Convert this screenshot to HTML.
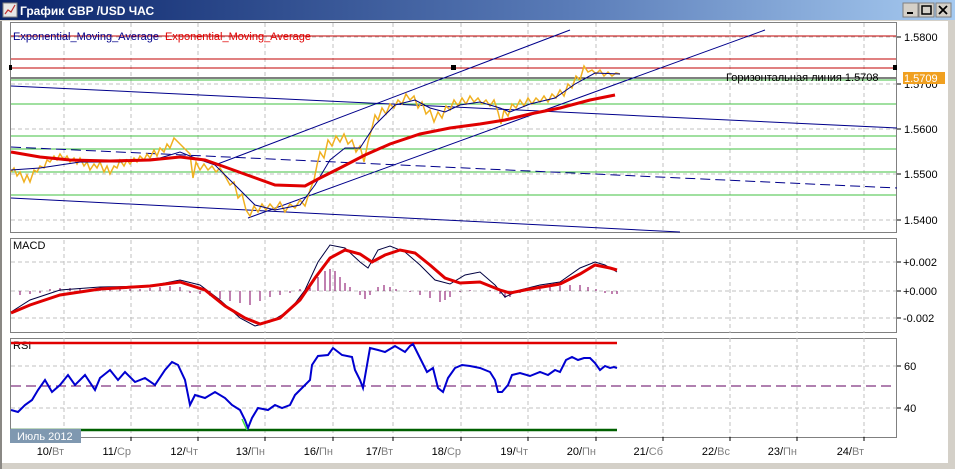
<!DOCTYPE html>
<html><head><meta charset="utf-8"><style>
body{margin:0;width:955px;height:469px;overflow:hidden;background:#d4d0c8;font-family:"Liberation Sans",sans-serif}
</style></head><body>
<svg width="955" height="469" xmlns="http://www.w3.org/2000/svg" style="position:absolute;left:0;top:0" font-family="Liberation Sans, DejaVu Sans, sans-serif">
<defs><linearGradient id="tb" x1="0" x2="1"><stop offset="0" stop-color="#0a246a"/><stop offset="0.6" stop-color="#5a7cb8"/><stop offset="1" stop-color="#a6caf0"/></linearGradient></defs>
<rect x="0" y="0" width="955" height="469" fill="#d4d0c8"/>
<rect x="0" y="0" width="955" height="20" fill="url(#tb)"/>
<rect x="3" y="3" width="14" height="14" fill="#e8e8e8" stroke="#808080"/>
<polyline points="5,14 8,10 11,12 15,5" fill="none" stroke="#c03030" stroke-width="1.2"/>
<text x="20" y="15" fill="#fff" font-weight="bold" font-size="12">График GBP /USD  ЧАС</text>
<g fill="#d4d0c8" stroke="#808080"><rect x="903" y="3" width="15" height="14"/><rect x="919" y="3" width="15" height="14"/><rect x="936" y="3" width="15" height="14"/></g>
<rect x="907" y="12" width="6" height="2" fill="#000"/>
<rect x="922" y="6" width="9" height="8" fill="none" stroke="#000" stroke-width="1.5"/>
<path d="M939 6l8 8M947 6l-8 8" stroke="#000" stroke-width="1.8"/>
<rect x="2" y="21" width="946" height="442" fill="#fff"/>
<rect x="948" y="21" width="7" height="448" fill="#d4d0c8"/>
<line x1="1" y1="21" x2="1" y2="469" stroke="#404040"/>
<g fill="none" stroke="#808080"><rect x="10.5" y="22.5" width="886" height="210"/><rect x="10.5" y="238.5" width="886" height="94"/><rect x="10.5" y="338.5" width="886" height="99"/></g>
<g stroke="#c0c0c0" stroke-dasharray="4,3">
<path d="M64 23V437M131 23V437M198 23V437M265 23V437M333 23V437M393 23V437M461 23V437M528 23V437M596 23V437M663 23V437M730 23V437M797 23V437M864 23V437"/>
<path d="M11 37H896M11 84H896M11 129H896M11 174H896M11 220H896M11 262H896M11 291H896M11 318H896M11 366H896M11 408H896"/>
</g>
<g stroke="#fff" stroke-width="5"><path d="M11 235.5H897M11 335.5H897"/></g>
<g stroke="#000"><path d="M897 37h4M897 84h4M897 129h4M897 174h4M897 220h4M897 262h4M897 291h4M897 318h4M897 366h4M897 408h4"/></g>
<g font-size="11" fill="#000">
<text x="904" y="41">1.5800</text><text x="904" y="88">1.5700</text><text x="904" y="133">1.5600</text><text x="904" y="178">1.5500</text><text x="904" y="224">1.5400</text>
<text x="903" y="266">+0.002</text><text x="903" y="295">+0.000</text><text x="903" y="322">-0.002</text>
<text x="904" y="370">60</text><text x="904" y="412">40</text>
</g>
<rect x="903" y="72" width="42" height="12" fill="#f0a020"/><text x="904" y="82" font-size="11" fill="#fff">1.5709</text>
<g stroke="#c00000"><path d="M11 36H896M11 59H896M11 68H896"/></g>
<g stroke="#40c040"><path d="M11 80H896M11 104H896M11 136H896M11 149H896M11 172H896M11 195H896"/></g>
<line x1="11" y1="78" x2="896" y2="78" stroke="#000"/>
<text x="726" y="81" font-size="11" fill="#000">Горизонтальная линия 1.5708</text>
<rect x="9" y="65" width="3" height="5" fill="#000"/><rect x="451" y="65" width="5" height="5" fill="#000"/><rect x="893" y="65" width="4" height="5" fill="#000"/>
<g stroke="#00008b" fill="none" stroke-width="1">
<path d="M248 218L765 30"/><path d="M215 165L570 30"/><path d="M11 86L897 128"/><path d="M11 198L680 232"/>
<path d="M11 147L897 188" stroke-dasharray="10,5"/>
</g>
<polyline fill="none" stroke="#f0b020" stroke-width="1.5" points="11,172 14,168 17,176 20,172 24,182 27,175 30,182 34,170 37,172 40,166 44,168 47,160 50,162 54,156 57,160 60,154 64,160 67,156 70,162 74,158 77,164 80,158 84,166 87,162 90,170 94,164 97,168 100,162 104,172 107,166 110,174 114,166 117,168 120,160 124,166 127,160 130,164 134,158 137,162 140,156 144,160 147,154 150,158 154,150 157,156 160,148 164,152 167,144 170,148 174,138 178,142 182,146 186,150 190,154 193,178 196,162 200,170 204,164 208,170 212,166 216,172 220,168 225,176 230,185 234,182 238,198 242,194 246,210 250,216 254,206 258,212 262,204 266,210 270,204 275,210 280,202 285,212 290,204 295,208 300,200 305,206 310,190 314,180 317,165 320,152 324,158 328,140 332,146 336,136 340,142 344,134 348,144 352,140 356,152 360,146 364,162 368,142 372,128 375,115 378,120 382,108 386,114 390,104 394,108 398,100 402,104 406,94 410,100 414,96 418,108 422,102 426,114 430,110 434,122 438,112 442,118 446,106 450,110 454,100 458,106 462,98 466,104 470,96 474,102 478,98 482,104 486,100 490,106 494,100 498,112 501,124 504,110 508,116 512,104 516,108 520,100 524,106 528,98 532,104 536,98 540,102 544,96 548,102 552,94 556,98 560,90 564,96 568,84 572,88 576,76 580,80 584,66 588,72 592,70 596,74 600,70 604,76 608,72 612,76 616,73 620,74"/>
<polyline fill="none" stroke="#000080" stroke-width="1" points="11,170 40,168 80,162 120,162 160,158 180,152 195,158 215,165 235,185 255,205 275,210 300,205 315,185 330,160 345,148 360,148 375,125 395,105 415,100 430,108 445,112 460,105 480,102 500,108 510,112 530,104 555,98 575,84 595,73 620,74"/>
<polyline fill="none" stroke="#e00000" stroke-width="3" points="11,152 40,157 70,160 110,161 150,160 180,157 205,160 225,167 250,176 275,185 305,186 320,178 340,168 365,155 390,144 420,134 450,128 480,124 505,120 530,114 560,108 590,100 615,95"/>
<text x="13" y="40" font-size="11" fill="#00008b">Exponential_Moving_Average</text><text x="165" y="40" font-size="11" fill="#e00000">Exponential_Moving_Average</text>
<text x="13" y="249" font-size="11" fill="#000">MACD</text>
<g stroke="#800060" stroke-width="1">
<path d="M20 291v4M30 291v3M40 291v2M50 291v-2M60 291v-3M70 291v-3M80 291v-2M90 291v-1M100 291v-2M110 291v-2M120 291v-3M130 291v-2M140 291v-2M150 291v-3M160 291v-4M170 291v-5M180 291v-4M190 291v2M200 291v3M210 291v5M220 291v8M230 291v10M240 291v12M250 291v14M260 291v10M270 291v6M280 291v4M290 291v2M300 291v-2M310 291v-8M318 291v-14M325 291v-20M330 291v-22M335 291v-20M340 291v-14M345 291v-8M350 291v-4M360 291v4M365 291v8M370 291v4M378 291v-4M384 291v-6M390 291v-4M396 291v-2M410 291v1M420 291v4M430 291v7M440 291v11M445 291v9M450 291v6M460 291v1M470 291v-1M490 291v-1M500 291v3M505 291v7M510 291v6M520 291v2M540 291v-2M550 291v-4M560 291v-5M570 291v-6M580 291v-6M588 291v-4M596 291v-2M605 291v2M612 291v3M617 291v3"/>
</g>
<polyline fill="none" stroke="#000040" stroke-width="1" points="11,312 30,300 60,290 100,287 150,286 180,280 200,285 220,300 240,318 255,326 270,322 290,310 305,290 318,262 330,245 345,248 360,262 368,268 378,250 390,246 405,252 420,265 435,280 450,284 465,275 480,272 495,285 505,297 520,290 540,285 560,282 580,268 595,262 605,265 617,272"/>
<polyline fill="none" stroke="#e00000" stroke-width="3" points="11,313 30,305 60,295 100,289 150,286 180,282 205,290 225,306 245,318 260,324 280,318 300,300 315,278 330,258 345,250 360,254 372,262 385,255 400,250 415,253 430,265 445,278 460,283 480,282 500,290 510,293 530,289 560,284 580,274 595,265 610,268 617,270"/>
<text x="13" y="349" font-size="11" fill="#000">RSI</text>
<line x1="11" y1="343" x2="617" y2="343" stroke="#e00000" stroke-width="2.5"/>
<line x1="11" y1="386" x2="896" y2="386" stroke="#600060" stroke-dasharray="10,5"/>
<line x1="11" y1="430" x2="617" y2="430" stroke="#006000" stroke-width="2.5"/>
<polyline fill="none" stroke="#0000d0" stroke-width="2" points="11,410 18,412 25,405 32,400 38,390 45,380 52,392 60,385 68,375 75,385 85,375 95,390 100,378 110,370 118,380 125,372 135,382 145,378 155,385 165,370 172,362 178,365 185,380 190,405 195,395 205,398 215,392 225,398 232,405 240,410 245,420 248,428 252,418 258,408 268,410 275,405 282,408 290,405 295,395 300,390 305,385 310,380 312,365 318,356 328,355 333,348 342,355 352,357 355,370 360,380 363,388 370,348 378,350 385,352 395,346 405,352 410,346 413,344 420,358 427,372 433,368 438,388 443,392 448,378 455,368 462,365 470,366 480,368 490,372 495,380 498,392 502,392 508,385 512,375 520,373 530,376 540,372 548,375 555,370 560,372 566,360 572,357 578,360 584,358 590,358 595,363 600,370 605,366 610,368 614,367 617,368"/>
<polyline fill="none" stroke="#40e040" stroke-width="1.5" points="242,419 247,430"/>
<g stroke="#000"><path d="M64 437v4M131 437v4M198 437v4M265 437v4M333 437v4M393 437v4M461 437v4M528 437v4M596 437v4M663 437v4M730 437v4M797 437v4M864 437v4"/></g>
<rect x="10" y="429" width="71" height="14" fill="#7f98b0"/><text x="17" y="440" font-size="11" fill="#fff">Июль 2012</text>
<g font-size="11" fill="#000" text-anchor="end">
<text x="64" y="455">10/<tspan fill="#808080">Вт</tspan></text>
<text x="131" y="455">11/<tspan fill="#808080">Ср</tspan></text>
<text x="198" y="455">12/<tspan fill="#808080">Чт</tspan></text>
<text x="265" y="455">13/<tspan fill="#808080">Пн</tspan></text>
<text x="333" y="455">16/<tspan fill="#808080">Пн</tspan></text>
<text x="393" y="455">17/<tspan fill="#808080">Вт</tspan></text>
<text x="461" y="455">18/<tspan fill="#808080">Ср</tspan></text>
<text x="528" y="455">19/<tspan fill="#808080">Чт</tspan></text>
<text x="596" y="455">20/<tspan fill="#808080">Пн</tspan></text>
<text x="663" y="455">21/<tspan fill="#808080">Сб</tspan></text>
<text x="730" y="455">22/<tspan fill="#808080">Вс</tspan></text>
<text x="797" y="455">23/<tspan fill="#808080">Пн</tspan></text>
<text x="864" y="455">24/<tspan fill="#808080">Вт</tspan></text>
</g>
</svg>
</body></html>
